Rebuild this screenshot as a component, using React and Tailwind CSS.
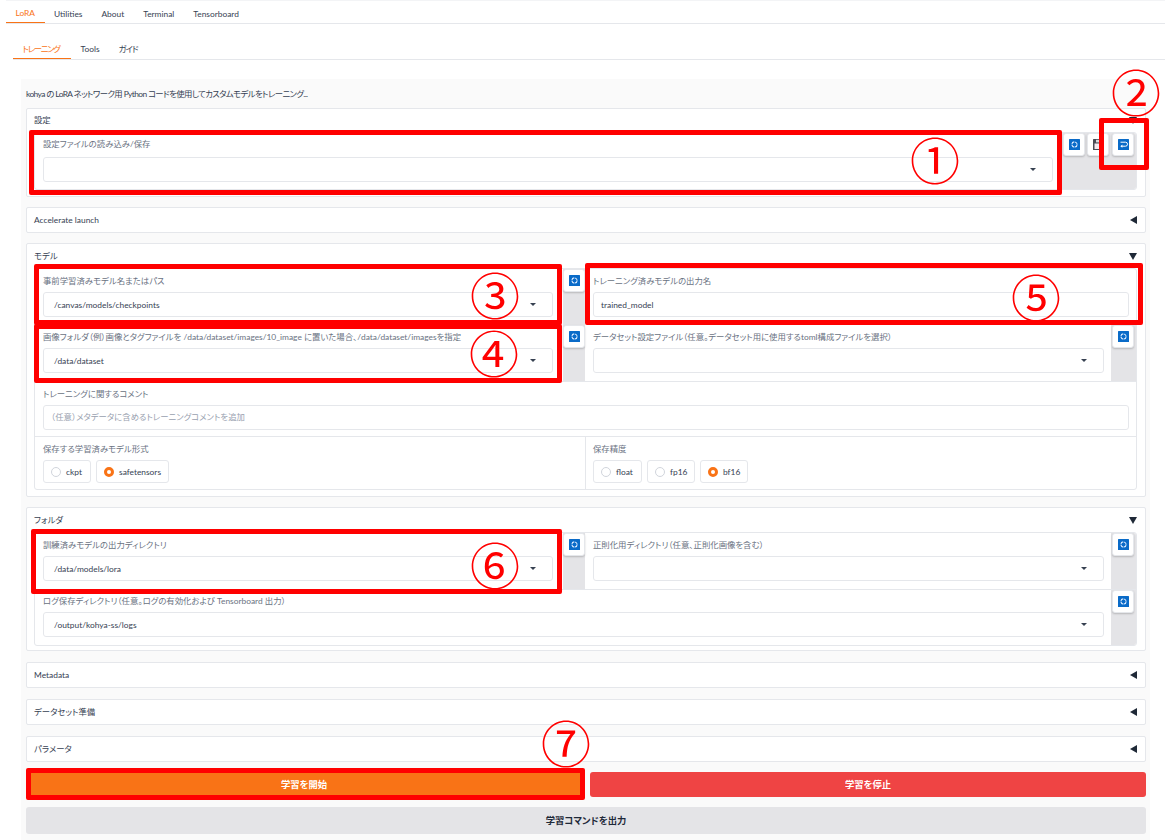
const FONT = "font-['Lato','Noto_Sans_CJK_JP',sans-serif] [font-feature-settings:'palt']";

function Refresh() {
  return (
    <svg width="11" height="11" viewBox="0 0 11 11" className="block">
      <rect width="11" height="11" rx="0.5" fill="#0a6bc8" />
      <circle cx="5.5" cy="5.5" r="2.6" fill="none" stroke="#dbeafe" strokeWidth="1.1" strokeDasharray="3.4 0.7" />
    </svg>
  );
}
function Save() {
  return (
    <svg width="11" height="11" viewBox="0 0 11 11" className="block">
      <rect width="11" height="11" rx="0.5" fill="#4b4b55" />
      <rect x="1.5" y="4.5" width="8" height="5.5" fill="#f4e8ee" />
      <rect x="3" y="0.8" width="5" height="2.6" fill="#d8d8dc" />
    </svg>
  );
}
function Ret() {
  return (
    <svg width="11" height="11" viewBox="0 0 11 11" className="block">
      <rect width="11" height="11" rx="0.5" fill="#0a6bc8" />
      <path d="M2.5 3.2H7.5A1.7 1.7 0 0 1 7.5 7.2H3.5" fill="none" stroke="#fff" strokeWidth="1" />
      <path d="M4.4 5.6L2.3 7.2L4.4 8.8Z" fill="#fff" />
    </svg>
  );
}
function IconBtn({ children }) {
  return (
    <button className="flex items-center justify-center w-[22px] h-[23px] bg-white border border-gray-200 rounded-[3px] shadow-[0_1px_2px_rgba(0,0,0,0.2)] shrink-0">
      {children}
    </button>
  );
}
function Caret() {
  return <span className="w-0 h-0 border-l-[3px] border-r-[3px] border-t-[3px] border-l-transparent border-r-transparent border-t-[#374151]" />;
}
function Label({ children, h = "h-[16px]" }) {
  return <div className={`${h} leading-[10px] text-[8.4px] text-gray-500 whitespace-nowrap`}>{children}</div>;
}
function Select({ label, value, labelH }) {
  return (
    <>
      <Label h={labelH}>{label}</Label>
      <div className="h-[25px] bg-white border border-gray-200 rounded-[3px] flex items-center justify-between pl-[10px] pr-[16px] text-[8.4px] text-gray-700">
        <span className="pt-[2px]">{value}</span>
        <Caret />
      </div>
    </>
  );
}
function TextBox({ label, value, placeholder }) {
  return (
    <>
      <Label>{label}</Label>
      <div className="h-[25px] bg-white border border-gray-200 rounded-[3px] flex items-center pl-[7px] text-[8.4px] text-gray-700">
        <span className="pt-[2px]">{value}</span>
        {placeholder && <span className="text-gray-400">{placeholder}</span>}
      </div>
    </>
  );
}
function Block({ title, children, headH, pb, mt }) {
  return (
    <section className={`bg-white border border-gray-200 ${mt} pl-[7px] pr-[8px] ${pb} rounded-[2px]`}>
      <div className={`${headH} flex items-center justify-between text-[8.4px] text-gray-700`}>
        <span>{title}</span>
        <span className="w-0 h-0 border-l-[4px] border-r-[4px] border-t-[7px] border-l-transparent border-r-transparent border-t-[#1f2937]" />
      </div>
      {children}
    </section>
  );
}
function Collapsed({ title, mt }) {
  return (
    <section className={`h-[26px] bg-white border border-gray-200 ${mt} pl-[7px] pr-[8px] flex items-center justify-between text-[8.4px] text-gray-700 rounded-[2px]`}>
      <span>{title}</span>
      <span className="w-0 h-0 border-t-[4px] border-b-[4px] border-r-[7px] border-t-transparent border-b-transparent border-r-[#1f2937]" />
    </section>
  );
}
function Form({ children }) {
  return <div className="border border-gray-200 rounded-[3px] bg-white overflow-hidden">{children}</div>;
}
function BtnCol({ w, pl }) {
  return (
    <div className={`${w} ${pl} bg-[#e4e4e7] shrink-0`}>
      <IconBtn><Refresh /></IconBtn>
    </div>
  );
}
function Radio({ label, checked, w }) {
  return (
    <div className={`${w} h-[23px] border border-gray-200 rounded-[3px] bg-white flex items-center pl-[7px] gap-[5px] text-[8.4px] text-gray-700`}>
      {checked ? (
        <span className="w-[10px] h-[10px] rounded-full border-[3px] border-[#f97316] bg-white shrink-0" />
      ) : (
        <span className="w-[10px] h-[10px] rounded-full border border-gray-300 bg-white shrink-0" />
      )}
      <span className="pt-[1px]">{label}</span>
    </div>
  );
}
function Tab({ children, active, cls = "" }) {
  return (
    <div className={`px-[9.5px] h-full flex items-center text-[8.4px] whitespace-nowrap ${cls} ${active ? "text-[#f97316] border-b border-[#f97316]" : "text-gray-700"}`}>
      {children}
    </div>
  );
}
const Num = ({ cls, children }) => (
  <span className={`absolute w-[60px] h-[60px] flex items-center justify-center text-[50px] leading-none text-[#ff0000] font-['Noto_Sans_CJK_JP',sans-serif] ${cls}`}>
    {children}
  </span>
);
const Box = ({ cls }) => <div className={`absolute border-[5px] border-[#ff0000] rounded-[2px] ${cls}`} />;

export default function App() {
  return (
    <div className={`relative h-[840px] w-[1170px] overflow-hidden bg-white ${FONT}`}>
      <div className="pl-[6px] pr-[5px]">
        <div className="h-[24px] pt-[4px] flex border-b border-gray-200 border-t-gray-100 border-t">
          <Tab active>LoRA</Tab>
          <Tab>Utilities</Tab>
          <Tab>About</Tab>
          <Tab>Terminal</Tab>
          <Tab>Tensorboard</Tab>
        </div>
        <div className="mt-[16px] ml-[7px] h-[20px] flex border-b border-gray-200">
          <Tab active cls="tracking-[-1.3px] w-[58px]">トレーニング</Tab>
          <Tab>Tools</Tab>
          <Tab cls="tracking-[-1px]">ガイド</Tab>
        </div>
      </div>

      <main className="mt-[19px] ml-[21px] mr-[20px] h-[761px] bg-[#fafafa] pl-[5px] pr-[4px]">
        <p className="h-[29px] pt-[2px] flex items-center text-[8.4px] text-gray-700 tracking-[-0.6px]">
          kohya の LoRA ネットワーク用 Python コードを使用してカスタムモデルをトレーニング...
        </p>

        <Block title="設定" headH="h-[23px]" pb="pb-[6px]">
          <Form>
            <div className="h-[56px] flex">
              <div className="flex-1 pt-[6px] pl-[8px] pr-[9px]">
                <Select label="設定ファイルの読み込み/保存" value="" labelH="h-[18px]" />
              </div>
              <div className="w-[74px] bg-[#e4e4e7] pl-[1px] flex gap-[2px] shrink-0">
                <IconBtn><Refresh /></IconBtn>
                <IconBtn><Save /></IconBtn>
                <span className="ml-[1px]"><IconBtn><Ret /></IconBtn></span>
              </div>
            </div>
          </Form>
        </Block>

        <Collapsed title="Accelerate launch" mt="mt-[10px]" />

        <Block title="モデル" headH="h-[24px]" pb="pb-[6px]" mt="mt-[10px]">
          <Form>
            <div className="h-[56px] flex">
              <div className="w-[528px] pt-[7px] pl-[8px] pr-[10px]">
                <Select label="事前学習済みモデル名またはパス" value="/canvas/models/checkpoints" />
              </div>
              <BtnCol w="w-[22px]" />
              <div className="flex-1 pt-[7px] pl-[8px] pr-[7px]">
                <TextBox label="トレーニング済みモデルの出力名" value="trained_model" />
              </div>
            </div>
            <div className="h-[56px] flex">
              <div className="w-[528px] pt-[7px] pl-[8px] pr-[10px]">
                <Select label="画像フォルダ（例）画像とタグファイルを /data/dataset/images/10_image に置いた場合、/data/dataset/imagesを指定" value="/data/dataset" />
              </div>
              <BtnCol w="w-[22px]" />
              <div className="flex-1 pt-[7px] pl-[8px] pr-[7px]">
                <Select label="データセット設定ファイル（任意。データセット用に使用するtoml構成ファイルを選択）" value="" />
              </div>
              <BtnCol w="w-[25px]" pl="pl-[1px]" />
            </div>
            <div className="h-[55px] border-t border-gray-200 pt-[7px] pl-[8px] pr-[7px]">
              <TextBox label="トレーニングに関するコメント" placeholder="（任意）メタデータに含めるトレーニングコメントを追加" />
            </div>
            <div className="h-[53px] border-t border-gray-200 flex">
              <div className="w-[551px] pt-[7px] pl-[8px] border-r border-gray-200">
                <Label>保存する学習済みモデル形式</Label>
                <div className="flex gap-[5px]">
                  <Radio label="ckpt" w="w-[48px]" />
                  <Radio label="safetensors" checked w="w-[73px]" />
                </div>
              </div>
              <div className="flex-1 pt-[7px] pl-[7px]">
                <Label>保存精度</Label>
                <div className="flex gap-[5px]">
                  <Radio label="float" w="w-[49px]" />
                  <Radio label="fp16" w="w-[48px]" />
                  <Radio label="bf16" checked w="w-[48px]" />
                </div>
              </div>
            </div>
          </Form>
        </Block>

        <Block title="フォルダ" headH="h-[24px]" pb="pb-[4px]" mt="mt-[10px]">
          <Form>
            <div className="h-[56px] flex">
              <div className="w-[528px] pt-[7px] pl-[8px] pr-[10px]">
                <Select label="訓練済みモデルの出力ディレクトリ" value="/data/models/lora" />
              </div>
              <BtnCol w="w-[22px]" />
              <div className="flex-1 pt-[7px] pl-[8px] pr-[7px]">
                <Select label="正則化用ディレクトリ（任意、正則化画像を含む）" value="" />
              </div>
              <BtnCol w="w-[25px]" pl="pl-[1px]" />
            </div>
            <div className="h-[56px] flex border-t border-gray-200">
              <div className="flex-1 pt-[6px] pl-[8px] pr-[7px]">
                <Select label="ログ保存ディレクトリ（任意。ログの有効化および Tensorboard 出力）" value="/output/kohya-ss/logs" />
              </div>
              <BtnCol w="w-[25px]" pl="pl-[1px]" />
            </div>
          </Form>
        </Block>

        <Collapsed title="Metadata" mt="mt-[11px]" />
        <Collapsed title="データセット準備" mt="mt-[11px]" />
        <Collapsed title="パラメータ" mt="mt-[11px]" />

        <div className="mt-[10px] grid grid-cols-2 gap-[8px]">
          <button className="h-[25px] bg-[#f97316] rounded-[3px] text-white text-[9.3px] font-bold">学習を開始</button>
          <button className="h-[25px] bg-[#ef4444] rounded-[3px] text-white text-[9.3px] font-bold">学習を停止</button>
        </div>
        <button className="mt-[10px] w-full h-[27px] bg-[#e4e4e7] rounded-[3px] text-gray-800 text-[9.3px] font-bold">学習コマンドを出力</button>
      </main>

      <Box cls="left-[29px] top-[130px] w-[1033px] h-[65px]" />
      <Box cls="left-[1099px] top-[118px] w-[50px] h-[52px]" />
      <Box cls="left-[34px] top-[264px] w-[528px] h-[61px]" />
      <Box cls="left-[34px] top-[324px] w-[528px] h-[59px]" />
      <Box cls="left-[585px] top-[263px] w-[558px] h-[62px]" />
      <Box cls="left-[31px] top-[529px] w-[531px] h-[65px]" />
      <Box cls="left-[26px] top-[768px] w-[559px] h-[32px]" />

      <Num cls="left-[905px] top-[128px]">①</Num>
      <Num cls="left-[1106px] top-[60px]">②</Num>
      <Num cls="left-[465px] top-[263px]">③</Num>
      <Num cls="left-[464px] top-[321px]">④</Num>
      <Num cls="left-[1006px] top-[265px]">⑤</Num>
      <Num cls="left-[465px] top-[533px]">⑥</Num>
      <Num cls="left-[536px] top-[711px]">⑦</Num>
    </div>
  );
}
